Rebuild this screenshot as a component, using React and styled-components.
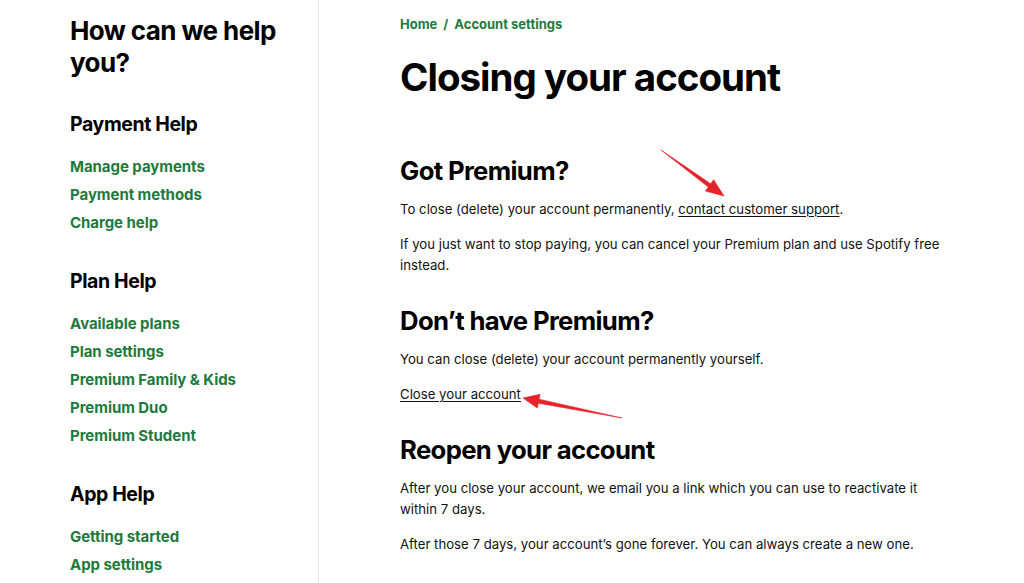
import React from "react";
import styled, { createGlobalStyle } from "styled-components";

const Global = createGlobalStyle`
  html, body { margin: 0; padding: 0; background: #fff; }
  body { font-family: Inter, "Noto Sans", Arial, sans-serif; color: #000; }
  * { box-sizing: border-box; }
`;

const Page = styled.div`
  position: relative;
  display: flex;
  width: 1024px;
  height: 583px;
  overflow: hidden;
  background: #fff;
`;

const Sidebar = styled.nav`
  width: 319px;
  flex: none;
  border-right: 1px solid #e9e9e9;
  padding: 15px 20px 0 70px;
`;

const SideTitle = styled.h2`
  margin: 0 0 32px;
  font-size: 26px;
  line-height: 32px;
  font-weight: 700;
  letter-spacing: -0.6px;
`;

const Group = styled.section`
  margin-bottom: 35px;
`;

const GroupTitle = styled.h3`
  margin: 0 0 20px;
  font-size: 19.5px;
  line-height: 26px;
  font-weight: 700;
  letter-spacing: -0.4px;
`;

const NavList = styled.ul`
  list-style: none;
  margin: 0;
  padding: 0;
  display: flex;
  flex-direction: column;
  gap: 8px;
`;

const NavLink = styled.a`
  display: block;
  font-size: 15px;
  line-height: 20px;
  font-weight: 700;
  color: #1e7a3c;
  text-decoration: none;
  letter-spacing: -0.05px;
`;

const Main = styled.main`
  flex: 1;
  padding: 15px 60px 0 81px;
`;

const Crumbs = styled.div`
  display: flex;
  gap: 6px;
  font-size: 13px;
  line-height: 18px;
  font-weight: 700;
  color: #1e7a3c;
`;

const Title = styled.h1`
  margin: 20px 0 53px;
  font-size: 38.5px;
  line-height: 48px;
  font-weight: 700;
  letter-spacing: -1px;
`;

const Heading = styled.h2`
  margin: 0 0 11px;
  font-size: 25.7px;
  line-height: 34px;
  font-weight: 700;
  letter-spacing: -0.65px;
`;

const Para = styled.p`
  margin: 0 0 14px;
  font-size: 13.2px;
  line-height: 21px;
  color: #111;
  max-width: 545px;
`;

const Section = styled.section`
  margin-bottom: 28px;
`;

const Under = styled.a`
  color: #111;
  text-decoration: underline;
  text-underline-offset: 2px;
`;

const Arrows = styled.svg`
  position: absolute;
  left: 0;
  top: 0;
  pointer-events: none;
`;

const groups = [
  { title: "Payment Help", links: ["Manage payments", "Payment methods", "Charge help"] },
  {
    title: "Plan Help",
    links: ["Available plans", "Plan settings", "Premium Family & Kids", "Premium Duo", "Premium Student"],
  },
  { title: "App Help", links: ["Getting started", "App settings"] },
];

export default function App() {
  return (
    <Page>
      <Global />
      <Sidebar>
        <SideTitle>How can we help you?</SideTitle>
        {groups.map((g) => (
          <Group key={g.title}>
            <GroupTitle>{g.title}</GroupTitle>
            <NavList>
              {g.links.map((l) => (
                <li key={l}>
                  <NavLink href="#">{l}</NavLink>
                </li>
              ))}
            </NavList>
          </Group>
        ))}
      </Sidebar>
      <Main>
        <Crumbs>
          <span>Home</span>
          <span>/</span>
          <span>Account settings</span>
        </Crumbs>
        <Title>Closing your account</Title>
        <Section>
          <Heading>Got Premium?</Heading>
          <Para>
            To close (delete) your account permanently, <Under href="#">contact customer support</Under>.
          </Para>
          <Para>
            If you just want to stop paying, you can cancel your Premium plan and use Spotify free instead.
          </Para>
        </Section>
        <Section>
          <Heading>Don’t have Premium?</Heading>
          <Para>You can close (delete) your account permanently yourself.</Para>
          <Para>
            <Under href="#">Close your account</Under>
          </Para>
        </Section>
        <Section>
          <Heading>Reopen your account</Heading>
          <Para>
            After you close your account, we email you a link which you can use to reactivate it within 7 days.
          </Para>
          <Para>After those 7 days, your account’s gone forever. You can always create a new one.</Para>
        </Section>
      </Main>
      <Arrows width="1024" height="583" viewBox="0 0 1024 583">
        <g fill="#e4242a" stroke="#e4242a" strokeWidth="0.6" strokeLinejoin="round">
          <polygon points="661,150 710.7,183.8 713.6,179.7 724,196 705.4,191.1 708.3,187" />
          <polygon points="622,418 538.3,403.2 537.3,408.1 523,398 540.1,394.3 539.1,399.2" />
        </g>
      </Arrows>
    </Page>
  );
}
